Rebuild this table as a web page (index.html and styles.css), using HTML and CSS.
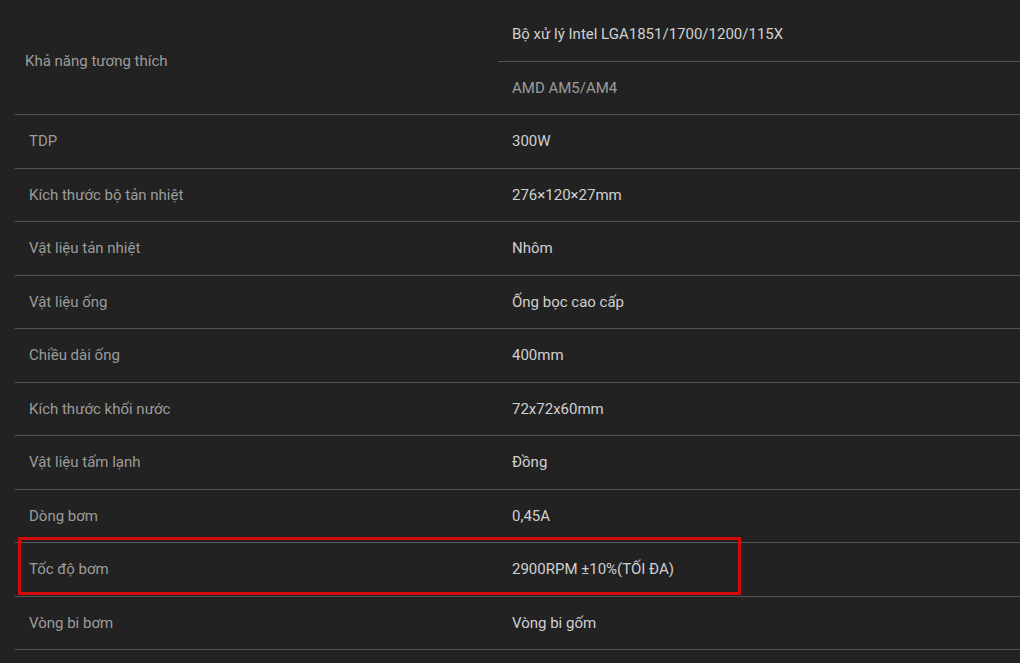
FILE: index.html
```html
<!DOCTYPE html>
<html lang="vi">
<head>
<meta charset="utf-8">
<link rel="stylesheet" href="styles.css">
</head>
<body>
<div class="page">
  <table class="specs">
    <tbody>
      <tr class="sub">
        <th class="label first" rowspan="2">Khả năng tương thích</th>
        <td class="value">Bộ xử lý Intel LGA1851/1700/1200/115X</td>
      </tr>
      <tr>
        <td class="value muted">AMD AM5/AM4</td>
      </tr>
      <tr><th class="label">TDP</th><td class="value">300W</td></tr>
      <tr><th class="label">Kích thước bộ tản nhiệt</th><td class="value">276×120×27mm</td></tr>
      <tr><th class="label">Vật liệu tản nhiệt</th><td class="value">Nhôm</td></tr>
      <tr><th class="label">Vật liệu ống</th><td class="value">Ống bọc cao cấp</td></tr>
      <tr><th class="label">Chiều dài ống</th><td class="value">400mm</td></tr>
      <tr><th class="label">Kích thước khối nước</th><td class="value">72x72x60mm</td></tr>
      <tr><th class="label">Vật liệu tấm lạnh</th><td class="value">Đồng</td></tr>
      <tr><th class="label">Dòng bơm</th><td class="value">0,45A</td></tr>
      <tr><th class="label">Tốc độ bơm</th><td class="value">2900RPM ±10%(TỐI ĐA)</td></tr>
      <tr><th class="label">Vòng bi bơm</th><td class="value">Vòng bi gốm</td></tr>
    </tbody>
  </table>
  <div class="highlight"></div>
</div>
</body>
</html>
```

FILE: styles.css
```css
html, body {
  margin: 0;
  padding: 0;
  background: #222222;
}

.page {
  position: relative;
  padding: 7.5px 0 0 15px;
  font-family: Roboto, "Noto Sans", "Liberation Sans", sans-serif;
  font-size: 15px;
}

.specs {
  width: 100%;
  border-collapse: collapse;
  table-layout: fixed;
}

.specs tr {
  height: 53.5px;
  border-bottom: 1px solid #555555;
}

.specs tr.sub {
  border-bottom: none;
}

.specs tr.sub .value {
  border-bottom: 1px solid #555555;
}

.label {
  width: 483px;
  box-sizing: border-box;
  padding: 0 14px;
  text-align: left;
  font-weight: normal;
  color: #9c9c9c;
  vertical-align: middle;
}

.label.first {
  padding-left: 10px;
}

.value {
  padding: 0 14px;
  color: #d0d0d0;
  vertical-align: middle;
}

.value.muted {
  color: #9c9c9c;
}

.highlight {
  position: absolute;
  left: 18px;
  top: 537px;
  width: 723px;
  height: 58px;
  box-sizing: border-box;
  border: 3px solid #d10a0a;
}
```
